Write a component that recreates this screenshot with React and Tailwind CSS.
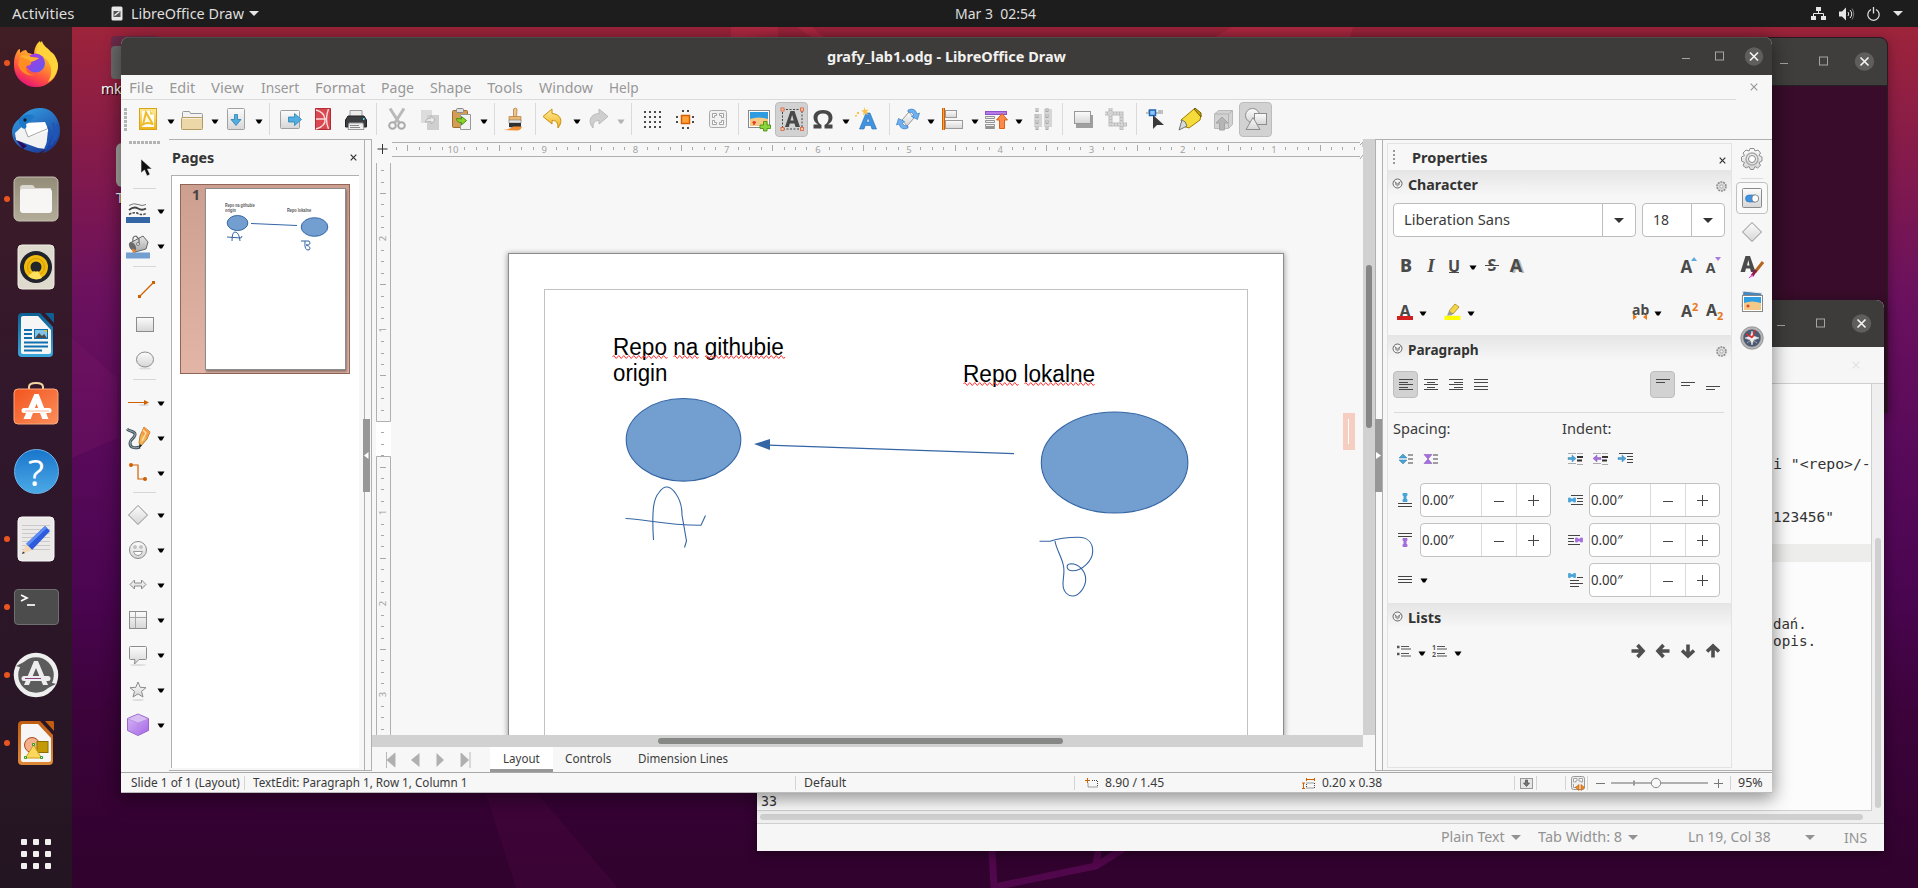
import React, { useLayoutEffect, useRef } from "react";

/* ---------- text that fills the width of its box ---------- */
function Fit({ className = "", children }) {
  const outer = useRef(null);
  const inner = useRef(null);
  useLayoutEffect(() => {
    const want = outer.current.getBoundingClientRect().width;
    const have = inner.current.offsetWidth;
    if (have) inner.current.style.transform = `scaleX(${want / have})`;
  }, [children]);
  return (
    <span ref={outer} className={"inline-block shrink-0 whitespace-nowrap leading-none " + className}>
      <span ref={inner} className="inline-block origin-left whitespace-pre">{children}</span>
    </span>
  );
}

const Svg = ({ w = 24, h = 24, c = "", children }) => (
  <svg width={w} height={h} viewBox={`0 0 ${w} ${h}`} className={"block shrink-0 overflow-visible " + c} fill="none">
    {children}
  </svg>
);
const Tri = ({ c = "", f = "#000" }) => (
  <Svg w={8} h={5} c={c}><path d="M0.5 0.5h7L5 4.5H3z" fill={f} /></Svg>
);
const Sep = ({ c }) => <span className={"block h-8 w-px shrink-0 bg-[#dadada] " + c} />;

function Gradients() {
  return (
    <svg width="0" height="0" className="absolute">
      <defs>
        <linearGradient id="gy" x2="0" y2="1"><stop stopColor="#fcfcfc" /><stop offset="1" stopColor="#d6d6d6" /></linearGradient>
        <linearGradient id="ff" x1=".8" y1="0" x2=".3" y2="1"><stop stopColor="#ffe83f" /><stop offset=".45" stopColor="#ff9a2e" /><stop offset=".75" stopColor="#ff4a44" /><stop offset="1" stopColor="#e3127b" /></linearGradient>
        <linearGradient id="tb" x2=".6" y2="1"><stop stopColor="#35a7e8" /><stop offset="1" stopColor="#1c3f9e" /></linearGradient>
        <linearGradient id="pp" x2="1" y2="1"><stop stopColor="#b833e1" /><stop offset="1" stopColor="#5a5df0" /></linearGradient>
        <linearGradient id="fl" x2="0" y2="1"><stop stopColor="#938c79" /><stop offset="1" stopColor="#b3ac99" /></linearGradient>
        <linearGradient id="or" x2="1" y2="1"><stop stopColor="#f3541d" /><stop offset="1" stopColor="#fb8f5c" /></linearGradient>
        <linearGradient id="yl" x2="0" y2="1"><stop stopColor="#ffeb9a" /><stop offset="1" stopColor="#f0b21a" /></linearGradient>
        <linearGradient id="vi" x2="1" y2="1"><stop stopColor="#d9b8f6" /><stop offset="1" stopColor="#a466e6" /></linearGradient>
        <linearGradient id="wr" x2="0" y2="1"><stop stopColor="#0c6192" /><stop offset="1" stopColor="#3aa7dc" /></linearGradient>
        <linearGradient id="dr" x2="0" y2="1"><stop stopColor="#c05d11" /><stop offset="1" stopColor="#dd8a3a" /></linearGradient>
        <linearGradient id="mn" x2="0" y2="1"><stop stopColor="#e8e8e8" /><stop offset="1" stopColor="#a8a8a8" /></linearGradient>
      </defs>
    </svg>
  );
}

/* ---------- dock ---------- */
const Firefox = () => (
  <Svg w={48} h={48}>
    <path d="M2 25c0-7 2-11 4-14 1-1 2-1 2-1l0 4c2-2 4-3 6-3l2 3c2 0 4 1 6 2 0-6 2-11 6-14 1 5 5 7 9 11 4 1 9 8 9 14a22 21 0 0 1-44 0z" fill="url(#ff)" />
    <path d="M30 2c1 5 6 7 9 11 3 1 7 8 7 14-1 8-5 14-10 16 4-6 5-16-1-22-5-5-10-5-11-7 1-6 3-10 6-12z" fill="#ffd43a" />
    <circle cx="23.500" cy="24" r="9.500" fill="url(#pp)" />
    <path d="M8 17c4-3 8-1 11 1l8 1c-2 2-6 3-8 4 1 3-3 4-5 4-1 5 3 9 9 9-8 2-16-4-17-11z" fill="#ff8d24" />
    <path d="M8 17c4-2 8-1 11 1l8 1c-2 2-6 3-8 4-2-3-7-3-11-6z" fill="#ffb02e" />
  </Svg>
);
const Thunderbird = () => (
  <Svg w={50} h={50}>
    <path d="M8 13C13 7 20 1 31 2c11 1 18 11 18 23 0 10-7 20-18 22l5-4-9 4C12 45 1 38 1 26c0-6 4-11 7-13z" fill="url(#tb)" />
    <path d="M3 31l9 12 4-3z" fill="#2b0d63" />
    <path d="M4 27l12-11 21 8-2 19-8-1-22-8z" fill="#f2f2f2" />
    <path d="M13 17l21-1 4 9-20 6z" fill="#fff" /><path d="M12 18l5 13 19-8" stroke="#a5a5a5" />
    <path d="M8 14c4-6 12-7 16-3-4 1-3 5-9 7 2 6-4 6-5 2-2-2-3-4-2-6z" fill="#1e78c8" />
    <circle cx="14" cy="14" r="1.700" fill="#123" />
    <path d="M37 21c3 6 1 15-3 22M42 17c3 7 2 16-2 22M46 18c2 7 0 12-2 16" stroke="#1d55b8" strokeWidth="2" />
  </Svg>
);
const Files = () => (
  <Svg w={46} h={46}>
    <rect x="1" y="1" width="44" height="44" rx="5" fill="url(#fl)" stroke="#c7c2b3" />
    <path d="M7 12q0-3 3-3h9q2 0 3 3l16 0v8H7z" fill="#d9d7d0" />
    <rect x="7" y="13" width="32" height="24" rx="3" fill="#f7f6f4" />
  </Svg>
);
const Rhythm = () => (
  <Svg w={38} h={46}>
    <rect x="1" y="1" width="36" height="44" rx="4" fill="#dedacd" stroke="#f0ede4" />
    <circle cx="19" cy="23" r="16" fill="#20232b" /><circle cx="19" cy="23" r="12" fill="#f0bb0d" />
    <circle cx="19" cy="23" r="8.500" stroke="#d29c08" /><circle cx="19" cy="23" r="5.500" fill="#23262b" />
    <path d="M11 32a12 12 0 0 0 14 2l-4-7q-2 1-4 0z" fill="#ffe15e" />
  </Svg>
);
const WriterIcon = () => (
  <Svg w={38} h={46}>
    <path d="M5 1h18l13 14v26q0 4-4 4H5q-4 0-4-4V5q0-4 4-4z" fill="url(#wr)" />
    <path d="M28 1h8q1 0 1 2v8z" fill="#0c6192" />
    <path d="M6 4h15l13 14v22q0 2-2 2H6q-2 0-2-2V6q0-2 2-2z" fill="#f6f6f6" />
    <path d="M7 18h8M7 22h8M7 26h8M7 30.500h24M7 34.500h24M7 38.500h18" stroke="#0f6fae" strokeWidth="2" />
    <rect x="17.500" y="17.500" width="13" height="9" fill="#7fc4e8" stroke="#0f6fae" />
    <path d="M18 26l4-5 3 3 2-2 3 4z" fill="#4a4a4a" /><path d="M27 18h3v3z" fill="#f7c400" />
  </Svg>
);
const Software = () => (
  <Svg w={46} h={44}>
    <path d="M16 9V6q0-4 7-4t7 4v3" stroke="#f6d6a0" strokeWidth="2" />
    <rect x="1" y="8" width="44" height="35" rx="4" fill="url(#or)" stroke="#f9a77f" />
    <path d="M22 14h3l9 23h-4l-6.500-17L17 37h-5z" fill="#fff" stroke="#fff" strokeWidth="2" />
    <path d="M11 29.500h25" stroke="#fff" strokeWidth="5" strokeLinecap="round" /><path d="M12 30h24" stroke="#f8b79b" />
  </Svg>
);
const Help = () => (
  <div className="flex size-[45px] items-center justify-center rounded-full border border-[#6cb6ec] bg-gradient-to-b from-[#1876cc] to-[#4ba9e6] font-['Open_Sans',sans-serif] text-[37px] leading-none text-white">?</div>
);
const Gedit = () => (
  <Svg w={38} h={46}>
    <rect x="1" y="1" width="36" height="44" rx="4" fill="#eceae9" stroke="#fafafa" />
    <path d="M5 9.500h28M5 13.500h28M5 17.500h28M5 21.500h28M5 25.500h28M5 29.500h28M5 33.500h28" stroke="#c9c9c9" />
    <path d="M9 28l19-18 5 5-18 19z" fill="#2c5bdc" /><path d="M9 28l19-18 2 2-19 18z" fill="#5d8cf5" />
    <path d="M9 28l6 6-10 4z" fill="#f4d7b5" /><path d="M6 35.500l2 1.500-3 1z" fill="#333" />
  </Svg>
);
const TermIcon = () => (
  <div className="h-[36px] w-[45px] rounded-[4px] border border-[#6f6f6f] bg-[#4c4c4c] px-[5px] py-[2px]">
    <Svg w={20} h={18}><path d="M1 3l6 3-6 3" stroke="#fff" strokeWidth="1.700" /><path d="M7 13h8" stroke="#fff" strokeWidth="1.700" /></Svg>
  </div>
);
const Updater = () => (
  <Svg w={46} h={46}>
    <circle cx="23" cy="23" r="20" fill="#5c5c5c" stroke="#eee" strokeWidth="4.500" />
    <path d="M3 14l7 2 3-7zM43 32l-7-2-3 7z" fill="#5c5c5c" />
    <path d="M21 9h4l10 24h-5l-7-17-7 17h-5z" fill="#eee" />
    <path d="M11 26.500h24" stroke="#eee" strokeWidth="5" strokeLinecap="round" /><path d="M12 26.500h16" stroke="#8a3d7d" />
  </Svg>
);
const DrawIcon = () => (
  <Svg w={38} h={46}>
    <path d="M5 1h18l13 14v26q0 4-4 4H5q-4 0-4-4V5q0-4 4-4z" fill="url(#dr)" />
    <path d="M28 1h8q1 0 1 2v8z" fill="#c05d11" />
    <path d="M6 4h15l13 14v22q0 2-2 2H6q-2 0-2-2V6q0-2 2-2z" fill="#f6f6f6" />
    <circle cx="15" cy="25" r="7.500" fill="#f3b08d" stroke="#b1491b" />
    <rect x="20" y="21.500" width="11" height="11" fill="#c39a05" stroke="#8a6c00" />
    <path d="M16.500 25l8 13h-16z" fill="#fbd75d" stroke="#cf9d14" />
    <path d="M15.500 23.500h2v2h-2zM7.500 36.500h2v2h-2zM23.500 36.500h2v2h-2z" fill="#fff" stroke="#2aa31d" />
  </Svg>
);

const dock = [
  [Firefox, true], [Thunderbird, false], [Files, true], [Rhythm, false], [WriterIcon, false], [Software, false],
  [Help, false], [Gedit, true], [TermIcon, true], [Updater, true], [DrawIcon, true],
];

function Dock() {
  return (
    <aside className="flex h-full w-[72px] shrink-0 flex-col bg-gradient-to-b from-[#411d24] via-[#31172c] via-45% to-[#241522] pt-[2px]">
      {dock.map(([Icon, on], i) => (
        <div key={i} className="flex h-[68px] shrink-0 items-center">
          <span className={"ml-1 size-[6px] rounded-full " + (on ? "bg-[#e95420]" : "bg-transparent")} />
          <div className="ml-[2px] flex w-12 justify-center"><Icon /></div>
        </div>
      ))}
      <div className="ml-[21px] mt-[62px] grid w-[30px] grid-cols-3 gap-[6px]">
        {Array.from({ length: 9 }, (_, i) => <span key={i} className="size-[6px] rounded-[1px] bg-[#f2f0ee]" />)}
      </div>
    </aside>
  );
}

/* ---------- top bar ---------- */
function TopBar() {
  return (
    <header className="flex h-[27px] w-full shrink-0 items-center bg-[#1d1d1d] text-[14px] text-[#dedede]">
      <Fit className="ml-3 w-[62px]">Activities</Fit>
      <Svg w={12} h={15} c="ml-[37px]">
        <rect x=".5" y=".5" width="11" height="14" rx="1.500" fill="#e8e8e8" /><path d="M2.500 5h7v6h-7z" fill="#555" /><path d="M3.500 9.500l5-4" stroke="#eee" strokeWidth="1.500" />
      </Svg>
      <Fit className="ml-2 w-[113px]">LibreOffice Draw</Fit>
      <Svg w={10} h={5} c="ml-[5px]"><path d="M0 0h10L5 5z" fill="#e6e6e6" /></Svg>
      <Fit className="ml-[696px] w-[81px]">Mar 3  02:54</Fit>
      <div className="ml-auto mr-[15px] flex items-center gap-[13px]">
        <Svg w={15} h={13}><path d="M5 0h5v4H5zM0 9h5v4H0zM10 9h5v4h-5z" fill="#e6e6e6" /><path d="M7.500 4v3M2.500 9V6.500h10V9" stroke="#e6e6e6" /></Svg>
        <Svg w={15} h={14}><path d="M0 4.500h3L7 .5v13l-4-4H0z" fill="#e6e6e6" /><path d="M9 5q1.500 2 0 4M11 3q3.500 4 0 8" stroke="#e6e6e6" /><path d="M13 1.500q3.500 5.500 0 11" stroke="#777" /></Svg>
        <Svg w={13} h={14}><path d="M4 2.500a5.700 5.700 0 1 0 5 0" stroke="#e6e6e6" strokeWidth="1.200" /><path d="M6.500 0v6.500" stroke="#e6e6e6" strokeWidth="1.300" /></Svg>
        <Svg w={10} h={5}><path d="M0 0h10L5 5z" fill="#e6e6e6" /></Svg>
      </div>
    </header>
  );
}

/* ---------- window frame pieces ---------- */
const WinButtons = ({ gap, size = 18 }) => (
  <div className={"flex items-center " + gap}>
    <Svg w={8} h={12}><path d="M0 7.500h8" stroke="#a5a4a2" /></Svg>
    <Svg w={9} h={9}><rect x=".5" y="0" width="8" height="8" stroke="#a5a4a2" /></Svg>
    <Svg w={size} h={20} c="-ml-1">
      <ellipse cx={size / 2} cy="9.500" rx={size / 2 + 0.2} ry="9.300" fill="#5f5e5d" />
      <path d={`M${size / 2 - 4} 5.500l8 8m0-8l-8 8`} stroke="#f4f4f4" strokeWidth="1.700" />
    </Svg>
  </div>
);
const Cross = ({ s = 8, f = "#333", c = "" }) => (
  <Svg w={s} h={s} c={c}><path d={`M.7.7L${s - 0.7} ${s - 0.7}M${s - 0.7}.7L.7 ${s - 0.7}`} stroke={f} strokeWidth="1.200" /></Svg>
);

function TerminalWindow() {
  return (
    <section className="absolute left-[757px] top-[37px] flex h-[376px] w-[1131px] flex-col overflow-hidden rounded-t-lg border border-[#2b1a24] bg-[#380c2a] shadow-[0_3px_12px_rgba(0,0,0,0.35)]">
      <div className="flex h-[48px] shrink-0 items-center justify-end border-b border-[#222] bg-[#3f3e3d] pr-[13px]">
        <WinButtons gap="gap-[31px]" size={19} />
      </div>
      <div className="flex-1 bg-[#380c2a]" />
    </section>
  );
}

const lines = {
  4: ['i "<repo>/-', "w-[98px]"], 7: ['123456"', "w-[61px]"], 13: ["dań.", "w-[34px]"], 14: ["opis.", "w-[43px]"],
};
function GeditWindow() {
  return (
    <section className="absolute left-[757px] top-[300px] flex h-[551px] w-[1127px] flex-col overflow-hidden rounded-t-lg bg-[#f6f6f6] shadow-[0_3px_12px_rgba(0,0,0,0.45)]">
      <div className="flex h-[47px] shrink-0 items-center justify-end bg-[#3d3c3a] pr-[13px]">
        <WinButtons gap="gap-[31px]" size={19} />
      </div>
      <div className="flex h-[37px] shrink-0 items-center justify-end border-b border-[#cfcfcf] bg-[#f6f6f6] pr-6"><Cross f="#e0e0e0" /></div>
      <div className="flex h-[427px] shrink-0">
        <div className="w-[1115px] overflow-hidden border-b border-r border-[#cfcfcf] bg-[#fcfcfc] font-['DejaVu_Sans_Mono',monospace] text-[14px] text-[#333]">
          {Array.from({ length: 24 }, (_, i) => (
            <div key={i} className={"flex h-[17.75px] items-center " + (i === 9 ? "bg-[#ededeb]" : "")}>
              {lines[i] && <Fit className={"ml-[1016px] " + lines[i][1]}>{lines[i][0]}</Fit>}
              {i === 23 && <Fit className="ml-1 w-4">33</Fit>}
            </div>
          ))}
        </div>
        <div className="flex-1 bg-[#efefef] pl-[3px] pt-[154px]"><div className="h-[270px] w-[6px] rounded-full bg-[#cfcfcf]" /></div>
      </div>
      <div className="flex h-[13px] shrink-0 items-center border-b border-[#cfcfcf] bg-[#efefef] pl-[3px]"><div className="h-[6px] w-[1103px] rounded-full bg-[#cfcfcf]" /></div>
      <div className="flex flex-1 items-center pb-px text-[14px] text-[#939393]">
        <Fit className="ml-[684px] w-[64px]">Plain Text</Fit>
        <Svg w={10} h={5} c="ml-[6px]"><path d="M0 0h10L5 5z" fill="#929292" /></Svg>
        <Fit className="ml-[17px] w-[84px]">Tab Width: 8</Fit>
        <Svg w={10} h={5} c="ml-[6px]"><path d="M0 0h10L5 5z" fill="#929292" /></Svg>
        <Fit className="ml-[50px] w-[83px]">Ln 19, Col 38</Fit>
        <Svg w={10} h={5} c="ml-[34px]"><path d="M0 0h10L5 5z" fill="#929292" /></Svg>
        <Fit className="ml-[29px] mt-[2px] w-[23px]">INS</Fit>
      </div>
    </section>
  );
}

/* ---------- Draw: standard toolbar ---------- */
const G = "#8c8c8c";
const I = {
  fresh: <><rect x="3.500" y="1.500" width="17" height="21" fill="url(#yl)" stroke="#d8a219" /><path d="M6 4h9l3 3v13H6z" fill="#fffdf2" /><path d="M14 3.500v4h4z" fill="#f5cf57" /><path d="M10 5.500l7 12q-5-3-10 0z" fill="#fff8dc" stroke="#eebc2a" strokeWidth="2" /></>,
  open: <><path d="M2.500 5.500q0-1 1-1h6l1 2h11q1 0 1 1V13h-20z" fill="#f2f2f2" stroke="#999" /><rect x="1.500" y="10.500" width="21" height="12" rx="1" fill="#ecd7a9" stroke="#b59a66" /><path d="M2.500 11.500h19" stroke="#faf0d8" /></>,
  save: <><rect x="3.500" y="1.500" width="17" height="21" rx="1" fill="url(#gy)" stroke="#a0a0a0" /><path d="M10.500 7.500h3v5h3.500L12 18.500 7 12.500h3.500z" fill="#52aee0" stroke="#2a82b4" strokeWidth=".8" /></>,
  exp: <><rect x="1.500" y="3.500" width="19" height="18" rx="1" fill="url(#gy)" stroke="#a0a0a0" /><path d="M9.500 10h6V6.500l7 6-7 6V15h-6z" fill="#52aee0" stroke="#2a82b4" strokeWidth=".8" /></>,
  pdf: <><path d="M4.500 1.500h15v21h-15z" fill="#d94850" stroke="#b32b34" /><path d="M5 3q8 2 9 9t-9 10M17.500 2q-4 10 0 20M5 12h10" stroke="#f7dada" strokeWidth="1.400" /></>,
  print: <><path d="M6 3.500h12v6H6z" fill="#ececec" stroke="#9a9a9a" /><path d="M4 9h16l2.500 4v7h-21v-7z" fill="#3c3f42" stroke="#222" /><path d="M5 16h14l1 6.500H4z" fill="#efefef" stroke="#999" /><path d="M6 18.500h9M6 20.500h10" stroke="#888" /><path d="M19 12h1.500" stroke="#4fd7ef" strokeWidth="2" /></>,
  cut: <><path d="M5 1.500l9 14M19 1.500l-9 14" stroke="#b9b9b9" strokeWidth="3" /><circle cx="7.500" cy="18.500" r="3.300" stroke="#aaa" strokeWidth="2" /><circle cx="16.500" cy="18.500" r="3.300" stroke="#aaa" strokeWidth="2" /></>,
  copy: <><path d="M3 3h11v13H3z" fill="#dcdcdc" /><path d="M9 8h12v15H9z" fill="#cfcfcf" /><path d="M7 15q1-4 6-4V8.500l4 4.500-4 4v-2.500q-3 0-6 .5z" fill="#e9e9e9" stroke="#b5b5b5" /></>,
  paste: <><rect x="3.500" y="3.500" width="15" height="17" rx="1" fill="#d39d55" stroke="#9f6e2c" /><rect x="7.500" y="1.500" width="7" height="4" rx="1" fill="#ddd" stroke="#888" /><path d="M11.500 7.500h10v15h-10z" fill="#f2f2f2" stroke="#999" /><path d="M7.500 9.500q0 4 5 4V16l5-4.500-5-4V10z" transform="translate(0 2)" fill="#8bd52c" stroke="#4c8f10" /></>,
  brush: <><path d="M10.500 2q2-2 3.500 0l-.5 8h-3z" fill="#f0c48a" stroke="#a8743a" strokeWidth=".7" /><path d="M6 9.500h12v4H6z" fill="#e9b873" stroke="#b27c3d" strokeWidth=".7" /><path d="M6 13h12v3H6z" fill="#e5e5e5" stroke="#777" strokeWidth=".6" /><path d="M6 16h12v4q-6 1-12 0z" fill="#2f3133" /><path d="M0 23q8-1 10-3.500h9q-1 4-5 4z" fill="#f18f34" /></>,
  undo: <path d="M2 9.500L11 2v4.500c8 .5 12 7 6 14.500 0-6-2-7.500-6-7.500V17z" fill="url(#yl)" stroke="#c98e12" />,
  redo: <path d="M22 9.500L13 2v4.500c-8 .5-12 7-6 14.500 0-6 2-7.500 6-7.500V17z" fill="#cfcfcf" stroke="#bababa" />,
  grid: <>{[5, 10, 15, 20].map((y) => <path key={y} d={`M4 ${y}h18`} stroke="#4a4a4a" strokeWidth="2" strokeDasharray="2 3" />)}</>,
  help: <><path d="M9 4h8M9 21h8M4 9v8M20 9v8" stroke="#4a4a4a" strokeWidth="2" strokeDasharray="2 3" /><rect x="8.500" y="8.500" width="8" height="8" fill="#ffa13b" stroke="#d55f00" strokeWidth="1.500" /></>,
  fit: <><rect x="3.500" y="3.500" width="17" height="17" rx="2" fill="#f1f1f1" stroke="#aaa" /><path d="M6.500 10.500v-4h4v2h-2v2zM13.500 6.500h4v4h-2v-2h-2zM6.500 13.500v4h4v-2h-2v-2zM17.500 13.500v4h-4v-2h2v-2z" fill="#fff" stroke="#999" strokeWidth=".9" /></>,
  image: <><rect x="1.500" y="3.500" width="21" height="17" fill="#fff" stroke="#888" /><path d="M3 5h18v8H3z" fill="#2f9be0" /><path d="M3 12q8-3 18 0v7H3z" fill="#f6c987" /><path d="M7 14v4M5.500 15.500h3.500" stroke="#e4341c" strokeWidth="1.500" /><path d="M16.500 14.500h3.500V18h3.500v3.500H20V24h-3.500v-2.500H13V18h3.500z" fill="#8bd53d" stroke="#4b9310" strokeWidth=".9" /></>,
  omega: <path d="M2.500 21.500v-4h4.500C4 15.500 2.500 13.500 2.500 10.500 2.500 6 6 3 12 3s9.500 3 9.500 7.500c0 3-1.500 5-4.500 7h4.500v4H13.500v-3.500q4-2 4-7 0-4.500-5.500-4.500T6.500 11q0 5 4 7v3.500z" fill="#484848" />,
  font: <><path d="M4.500 22L11 6h4l6.500 16h-4.500l-1.200-3.500h-5.500L9 22zM11.500 15h3.200L13 10.500z" fill="#3f93e0" stroke="#2f6fb0" strokeWidth=".6" /><path d="M9 0l1.500 3 3-.5-2 2.500 1.500 3-3-1.500L8 8.500l.5-3.200L6 3.500l3-.3zM2 5h2v2H2zM0 8h2v1.500H0z" fill="#ffc13f" /></>,
  xform: <><path d="M13 5l5 6-7 8-5-6z" fill="url(#gy)" stroke="#999" /><path d="M12 3q7-3 9 4l2.500-1-2 6.500-6-3 2.500-1.500q-2-3.500-6-3z" fill="#6fb1ee" stroke="#3a7fc6" strokeWidth=".7" /><path d="M12 21q-7 3-9-4l-2.500 1L2.500 11.500l6 3L6 16q2 3.500 6 3z" fill="#6fb1ee" stroke="#3a7fc6" strokeWidth=".7" /></>,
  align: <><path d="M3.500 1v22" stroke="#d55f00" strokeWidth="3" /><path d="M3.500 1v22" stroke="#ffa13b" /><rect x="5.500" y="3.500" width="11" height="7" fill="url(#gy)" stroke="#999" /><rect x="5.500" y="13.500" width="17" height="8" fill="url(#gy)" stroke="#999" /></>,
  arrange: <><rect x="1.500" y="4.500" width="21" height="3" fill="#b57ae8" stroke="#8e51c9" /><path d="M1.500 9.500h9v2h-9zM1.500 13.500h9v2h-9zM1.500 17.500h9v2h-9zM1.500 20.500h9v1h-9z" fill="#eee" stroke="#888" strokeWidth=".9" /><path d="M18 6.500l5.500 6.500h-3v8.500h-5V13h-3z" fill="#f98a4a" stroke="#d5560c" strokeWidth=".9" /></>,
  dist: <><rect x="4" y="7" width="8" height="13" fill="#d6d6d6" /><rect x="14" y="2" width="8" height="18" fill="#d6d6d6" /><path d="M7 1v22M17 1v22" stroke="#a9a9a9" strokeWidth="3" strokeDasharray="4 2" /><path d="M7 1v22M17 1v22" stroke="#e6e6e6" strokeDasharray="3 3" /></>,
  shadow: <><rect x="5" y="8" width="17" height="13" fill="#9f9f9f" /><rect x="3.500" y="4.500" width="16" height="12" fill="url(#gy)" stroke="#999" /></>,
  crop: <><path d="M1 6.500h16.500V23M6.500 1v16.500H23" stroke="#bdbdbd" strokeWidth="4" /><path d="M1 6.500h16.500V23M6.500 1v16.500H23" stroke="#d9d9d9" strokeWidth="2" strokeDasharray="2 1" /></>,
  pts: <><path d="M3 6h17M5 4h3M15 4h5" stroke="#888" strokeWidth="1.200" /><rect x="6.500" y="3" width="6" height="5.500" fill="#8fc4f6" stroke="#1e66b8" strokeWidth="1.500" /><path d="M10 8v14l4-4h7z" fill="#3a3a3a" /></>,
  glue: <><path d="M3 13l13-11 7 6-1 5-11 8-6-2z" fill="#f5dc3b" stroke="#9b7f00" strokeWidth="1" /><path d="M16 2l1-1 6 5v4z" fill="#cfa900" stroke="#6e5a00" /><path d="M4 13q4 1 5 6L1 23z" fill="#d9d9d9" stroke="#666" strokeWidth=".9" /></>,
  extr: <><path d="M3.500 7l4-3.500h14v14l-4 4h-14z" fill="#d2d2d2" stroke="#b9b9b9" /><path d="M3.500 7h14v14M17.500 7l4-3.500" stroke="#b3b3b3" /><path d="M11 10l6 6h-3.500v7h-5v-7H5z" fill="#b5b5b5" stroke="#a4a4a4" /></>,
  shapes: <><circle cx="8.500" cy="8.500" r="7" fill="url(#gy)" stroke={G} /><rect x="10.500" y="6.500" width="12" height="11" fill="url(#gy)" stroke={G} /><path d="M9 10.500l7 12H2z" fill="url(#gy)" stroke={G} /></>,
};
const T = ({ n, c }) => <Svg c={c}>{I[n]}</Svg>;

function StandardBar() {
  return (
    <div className="flex h-[38px] shrink-0 items-center overflow-hidden pl-[3px]">
      <Svg w={3} h={23}><path d="M1.500 0v23" stroke="#b3b3b3" strokeWidth="3" strokeDasharray="3 1" /></Svg>
      <T n="fresh" c="ml-[9px]" /><Tri c="ml-[7px] mt-1" /><T n="open" c="ml-[5px]" /><Tri c="ml-[7px] mt-1" /><T n="save" c="ml-[5px]" /><Tri c="ml-[7px] mt-1" />
      <Sep c="ml-[6px]" /><T n="exp" c="ml-[9px]" /><T n="pdf" c="ml-2" /><T n="print" c="ml-[9px]" />
      <Sep c="ml-2" /><T n="cut" c="ml-2" /><T n="copy" c="ml-[9px]" /><T n="paste" c="ml-[7px]" /><Tri c="ml-[7px] mt-1" />
      <Sep c="ml-[6px]" /><T n="brush" c="ml-2" /><Sep c="ml-2" />
      <T n="undo" c="ml-[5px]" /><Tri c="ml-2 mt-1" /><T n="redo" c="ml-[5px]" /><Tri c="ml-[7px] mt-1" f="#b4b4b4" />
      <Sep c="ml-[6px]" /><T n="grid" c="ml-2" /><T n="help" c="ml-[9px]" /><T n="fit" c="ml-[9px]" />
      <Sep c="ml-2" /><T n="image" c="ml-2" />
      <div className="ml-1 flex h-[35px] w-[33px] shrink-0 items-center justify-center rounded-[4px] border border-[#bcbcbc] bg-[#d2d2d2]">
        <Svg>
          <rect x="2.500" y="2.500" width="19.500" height="19.500" stroke="#444" strokeDasharray="2 1.500" />
          <path d="M5 20L10.500 4h4L20 20h-4.500l-1-3.500H9.800L8.800 20zM10.500 13.500h3.200l-1.600-5.500z" fill="#484848" />
          {[[1, 1], [20.5, 1], [1, 20.5], [20.5, 20.5]].map(([x, y]) => <rect key={x + "-" + y} x={x} y={y} width="3" height="3" fill="#ffc79c" stroke="#dd6a50" strokeWidth=".9" />)}
        </Svg>
      </div>
      <T n="omega" c="ml-[3px]" /><Tri c="ml-[7px] mt-1" /><T n="font" c="ml-[5px]" />
      <Sep c="ml-[10px]" /><T n="xform" c="ml-[6px]" /><Tri c="ml-[7px] mt-1" /><T n="align" c="ml-[5px]" /><Tri c="ml-[7px] mt-1" /><T n="arrange" c="ml-[5px]" /><Tri c="ml-[7px] mt-1" /><T n="dist" c="ml-[7px]" />
      <Sep c="ml-2" /><T n="shadow" c="ml-2" /><T n="crop" c="ml-[9px]" />
      <Sep c="ml-2" /><T n="pts" c="ml-[6px]" /><T n="glue" c="ml-[11px]" /><T n="extr" c="ml-[9px]" />
      <div className="ml-1 flex h-[35px] w-[33px] shrink-0 items-center justify-center rounded-[4px] border border-[#bcbcbc] bg-[#d2d2d2]"><T n="shapes" /></div>
    </div>
  );
}

/* ---------- Draw: left toolbox ---------- */
const B = {
  lcol: <><path d="M3 6.500q5-3 9-1t8 0" stroke="#777" /><path d="M3 11q5-4 9-1.500t8 0" stroke="#444" strokeWidth="1.800" /><path d="M3 15.500q5-3 9-1t8 0" stroke="#444" strokeDasharray="2.500 1.200" strokeWidth="1.500" /><path d="M0 18h24v6H0z" fill="#3465a4" /></>,
  fill: <><path d="M4 9L17 2l5 6-2 7-11 3z" fill="url(#mn)" stroke="#666" /><ellipse cx="6.500" cy="12.500" rx="3" ry="5" fill="#6a6a6a" transform="rotate(-30 6.500 12.500)" /><path d="M7 8q-1-6 3-6l3 3v5" stroke="#666" strokeWidth="1.200" /><circle cx="12" cy="10" r="1.500" fill="#eee" stroke="#666" strokeWidth=".8" /><path d="M6 15q4-1 3 5H7z" fill="#f08022" /><path d="M0 18.500h24v6H0z" fill="#729fcf" /></>,
  arrow: <><ellipse cx="18" cy="14" rx="5" ry="1" fill="#ddd" /><path d="M2 11.500h17" stroke="#d05f00" /><path d="M18 9l5 2.500-5 2.500z" fill="#d05f00" /></>,
  pencil: <><path d="M1 3c3 3 9 2 8 6s-5 4-5 8 3 6 10 4" stroke="#46555e" strokeWidth="3" /><path d="M1 3c3 3 9 2 8 6s-5 4-5 8 3 6 10 4" stroke="#9fb0ba" /><path d="M18 1l6 5-3 7-6 7-2-3 1-7z" fill="#f3b14f" stroke="#9d6a1e" strokeWidth=".8" /><path d="M18 1l6 5-3 6-6-4z" fill="#f79a45" /><path d="M17 4l3 3-4 8" stroke="#fde2a4" strokeWidth="1.400" /><path d="M13.500 18l2.500 1.500-3 3z" fill="#222" /></>,
  conn: <><path d="M5 4h7v14h8" stroke="#d05f00" strokeWidth="1.200" /><circle cx="5" cy="4" r="2" fill="#d05f00" /><circle cx="19" cy="18" r="2" fill="#d05f00" /></>,
  dia: <path d="M12 2.500l9.500 9.500-9.500 9.500L2.500 12z" fill="url(#gy)" stroke={G} />,
  smile: <><circle cx="12" cy="12" r="8.500" fill="url(#gy)" stroke={G} /><rect x="7.500" y="7.500" width="3" height="3" rx="1.500" fill="#c6c6c6" stroke="#aaa" strokeWidth=".5" /><rect x="13.500" y="7.500" width="3" height="3" rx="1.500" fill="#c6c6c6" stroke="#aaa" strokeWidth=".5" /><path d="M7.500 13.500h9q-1 4-4.500 4t-4.500-4z" fill="#fff" stroke="#999" /></>,
  dbl: <path d="M4 11.500L8.500 7v3h7V7l4.500 4.500-4.500 4.500v-3h-7v3z" fill="url(#gy)" stroke={G} />,
  flow: <><rect x="3.500" y="3.500" width="17" height="17" fill="url(#gy)" stroke={G} /><path d="M9.500 4v16M4 9.500h16" stroke="#a5a5a5" /></>,
  call: <><path d="M4.500 3.500h15q1 0 1 1v11q0 1-1 1H13L8.500 21l.5-4.500H4.500q-1 0-1-1v-11q0-1 1-1z" fill="url(#gy)" stroke={G} /><ellipse cx="12" cy="22" rx="8" ry="1" fill="#ddd" /></>,
  star: <><path d="M12 4l2.200 5.300 5.800.4-4.500 3.700 1.500 5.600-5-3.100-5 3.100 1.500-5.600L4 9.700l5.800-.4z" fill="url(#gy)" stroke={G} /><ellipse cx="12" cy="22" rx="6" ry="1" fill="#ddd" /></>,
  cube: <><path d="M12 1l10.500 4.500v12L12 22.500 1.500 17.500v-12z" fill="url(#vi)" stroke="#9a66cc" /><path d="M12 1.500L22 6l-10 4L2 6z" fill="#d8bdf3" /><path d="M12 10v12M2 6l10 4 10-4" stroke="#b78be6" strokeWidth=".8" /></>,
};
const Tool = ({ n, top = "" }) => (
  <div className={"flex h-[35px] shrink-0 items-center pl-[5px] " + top}>
    <Svg c="-mt-[1px]">{B[n]}</Svg><Tri c="ml-[7px]" />
  </div>
);
const HSep = ({ c }) => <div className={"ml-3 h-px w-[23px] shrink-0 bg-[#d6d6d6] " + c} />;

function Toolbox() {
  return (
    <div className="flex w-[48px] shrink-0 flex-col">
      <Svg w={31} h={7} c="ml-2"><path d="M0 3.500h31" stroke="#b3b3b3" strokeWidth="3" strokeDasharray="3 1" /></Svg>
      <div className="flex h-[42px] shrink-0 items-center pl-3"><Svg><path d="M8 4v14l3.500-3 2.500 6 3-1.500-2.500-5.500h4.500z" fill="#111" stroke="#f7f7f7" strokeWidth=".6" /></Svg></div>
      <HSep c="" />
      <Tool n="lcol" top="mt-[5px]" /><Tool n="fill" />
      <HSep c="mt-[2px]" />
      <div className="mt-1 flex h-[35px] shrink-0 items-center pl-[14px]"><Svg><path d="M5 19L19 5" stroke="#d05f00" strokeWidth="1.300" /><path d="M3 18h3v3H3zM17 4h3v3h-3z" fill="#d05f00" /></Svg></div>
      <div className="flex h-9 shrink-0 items-center pl-3"><Svg><rect x="3.500" y="5.500" width="17" height="14" fill="url(#gy)" stroke={G} /></Svg></div>
      <div className="flex h-[35px] shrink-0 items-center pl-3"><Svg><ellipse cx="12" cy="20.500" rx="6" ry="1" fill="#ddd" /><ellipse cx="12" cy="11.500" rx="8.500" ry="7.500" fill="url(#gy)" stroke={G} /></Svg></div>
      <HSep c="mt-[2px]" />
      <Tool n="arrow" top="mt-[6px]" /><Tool n="pencil" /><Tool n="conn" />
      <HSep c="mt-px" />
      <Tool n="dia" top="mt-[5px]" /><Tool n="smile" /><Tool n="dbl" /><Tool n="flow" /><Tool n="call" /><Tool n="star" /><Tool n="cube" />
    </div>
  );
}

/* ---------- Draw: pages panel ---------- */
function PagesPanel() {
  return (
    <div className="flex w-[203px] shrink-0 border-y border-[#b0b0b0]">
      <div className="flex w-[196px] shrink-0 flex-col border-r border-[#b0b0b0] bg-[#f7f7f7] pl-[2px]">
        <div className="flex h-[35px] shrink-0 items-center justify-between pr-[7px]">
          <Fit className="ml-px w-[42px] text-[14px] font-bold text-[#333]">Pages</Fit>
          <Cross s={7} />
        </div>
        <div className="h-[593px] w-[188px] border-l border-t border-[#b0b0b0] bg-white pl-2 pt-2">
          <div className="flex h-[190px] w-[170px] justify-end border border-[#8f6659] bg-gradient-to-b from-[#cd9f90] to-[#e2b5a6] pr-[3px] pt-[3px]">
            <span className="mr-[5px] text-[14px] font-bold leading-none text-[#444]">1</span>
            <div className="h-[182px] w-[141px] border border-[#8c8c8c] bg-white pl-[19px] pt-[14px] font-['Liberation_Sans',sans-serif] text-[5px] font-bold text-[#555] shadow-[1px_2px_2px_rgba(0,0,0,0.35)]">
              <div className="flex h-[5px] items-center"><Fit className="w-[30px]">Repo na githubie</Fit></div>
              <div className="flex h-[5px] items-center"><Fit className="w-[11px]">origin</Fit><Fit className="ml-[51px] w-[24px]">Repo lokalne</Fit></div>
              <Svg w={110} h={44}>
                <g stroke="#3465a4"><ellipse cx="12.500" cy="10" rx="10.300" ry="7.500" fill="#729fcf" /><ellipse cx="89.500" cy="14" rx="13.300" ry="9.300" fill="#729fcf" />
                  <path d="M26 10.500l46 2M2 24l14 1 1-2M7 28q0-9 3-9 4 0 5 9M76 28h8q3 4-3 4 6 2 3 5-5 1-4-9" /></g>
              </Svg>
            </div>
          </div>
        </div>
      </div>
      <div className="flex w-[7px] shrink-0 flex-col border-r border-[#b0b0b0] pt-[279px]">
        <div className="-ml-[2px] flex h-[73px] w-[7px] items-center bg-[#979797]"><Svg w={6} h={7}><path d="M5.500 0v7L1 3.500z" fill="#fff" /></Svg></div>
      </div>
    </div>
  );
}

/* ---------- Draw: workspace ---------- */
function HRuler() {
  const ticks = [];
  for (let k = -5; k < 80; k++) {
    const x = 61 + k * 11.402;
    if (x < 2 || x > 968) continue;
    const m = ((k % 8) + 8) % 8;
    if (m === 0) ticks.push(<text key={k} x={x} y="14" textAnchor="middle" fontSize="9.500" fill="#a2a2a2" stroke="none">{10 - k / 8}</text>);
    else ticks.push(<path key={k} d={m === 4 ? `M${Math.round(x) + 0.5} 6v6` : `M${Math.round(x) + 0.5} 8v3`} />);
  }
  return (
    <div className="flex h-[21px] shrink-0">
      <Svg w={20} h={21}><path d="M5.500 10h10M10.500 5v10" stroke="#333" /></Svg>
      <Svg w={971} h={21}><g stroke="#a8a8a8"><path d="M0 3.500h968M0 17.500h968" stroke="#b0b0b0" />{ticks}<path d="M968 6l3-3v5M968 20l3-4" /></g></Svg>
    </div>
  );
}
function VRuler() {
  const ticks = [];
  for (let k = -22; k < 28; k++) {
    const y = 261 + k * 11.402;
    if (y < 6 || y > 573) continue;
    const m = ((k % 8) + 8) % 8;
    if (m === 0 && k !== 0) ticks.push(<text key={k} textAnchor="middle" fontSize="9.500" fill="#a2a2a2" stroke="none" transform={`translate(14 ${y}) rotate(-90)`}>{Math.abs(k / 8)}</text>);
    else if (k !== 0) ticks.push(<path key={k} d={m === 4 ? `M8 ${Math.round(y) + 0.5}h6` : `M9 ${Math.round(y) + 0.5}h3`} />);
  }
  return (
    <Svg w={20} h={575}>
      <rect x="4" y="261" width="15" height="35" fill="#fff" />
      <g stroke="#a8a8a8"><path d="M4.500 3v258.500h14V3M4.500 575V296.500h14V575" stroke="#b0b0b0" />{ticks}</g>
    </Svg>
  );
}
const wave = (x, y, len) => {
  let d = `M${x} ${y + 1.5}`;
  for (let i = 0; i < len; i += 5) d += "l1.25 -1.500l1.25 1.500l1.25 1.500l1.25 -1.500";
  return d;
};
function Canvas() {
  return (
    <div className="relative h-[575px] w-[971px] shrink-0 overflow-hidden bg-[#f7f7f7]">
      <div className="absolute left-[116px] top-[93px] h-[600px] w-[776px] border border-[#8c8c8c] bg-white p-[35px] shadow-[0_1px_5px_1px_rgba(0,0,0,0.32)]">
        <div className="h-full w-[704px] border border-[#c2c2c2]" />
      </div>
      <svg className="absolute inset-0" width="971" height="575" viewBox="392 160 971 575" fill="none" stroke="#3465a4" strokeWidth="1.100">
        <ellipse cx="683.500" cy="439.800" rx="57.300" ry="41.300" fill="#729fcf" />
        <ellipse cx="1114.600" cy="462.500" rx="73.300" ry="50.500" fill="#729fcf" />
        <path d="M768 445.100L1014 453.600" />
        <path d="M754 444l16-5v11z" fill="#3465a4" stroke="none" />
        <path d="M625.500 518.500C645 519 662 525 701 525.300L705.500 515.500" />
        <path d="M653.500 540C651.500 508 654 498 659 492.500C664 485 670 485 676 494C681 501 682 510 682 515L686.500 541L684.500 547.500" />
        <path d="M1039.500 541.300H1050C1058 538.500 1070 537.300 1078 537.300C1089 537.300 1092.700 544 1092.700 551C1092.700 561 1082 570.800 1072.500 570.800C1066 570.500 1065.500 564 1070.500 563.700C1080 563.700 1085.700 572 1085.700 579.500C1085.700 587 1079 596 1072.500 596C1068 596 1063 592 1063 584C1063 578 1064.800 572 1063.500 566C1062 557 1056 549 1055 541" />
      </svg>
      <div className="absolute left-[221px] top-[175px] flex flex-col font-['Liberation_Sans',Arial,sans-serif] text-[23.500px] text-black">
        <div className="flex h-[26px] items-center"><Fit className="w-[171px]">Repo na githubie</Fit></div>
        <div className="flex h-[26px] items-center"><Fit className="w-[54px]">origin</Fit></div>
      </div>
      <div className="absolute left-[571px] top-[202px] flex h-[26px] items-center font-['Liberation_Sans',Arial,sans-serif] text-[23.500px] text-black"><Fit className="w-[132px]">Repo lokalne</Fit></div>
      <svg className="absolute inset-0" width="971" height="575" viewBox="392 160 971 575" fill="none" stroke="#f33" strokeWidth="1">
        <path d={wave(612.5, 355.5, 53)} /><path d={wave(673.5, 355.5, 23)} /><path d={wave(705, 355.5, 78)} />
        <path d={wave(963.5, 382.5, 53)} /><path d={wave(1024.5, 382.5, 70)} />
      </svg>
      <div className="absolute left-[951px] top-[253px] flex h-[37px] w-[12px] items-center justify-center bg-[#f5cec1]"><span className="-ml-px h-[25px] w-px bg-white" /></div>
    </div>
  );
}
function Workspace() {
  return (
    <div className="flex w-[1003px] shrink-0 flex-col">
      <div className="flex h-[596px] shrink-0">
        <div className="flex w-[991px] shrink-0 flex-col">
          <HRuler />
          <div className="flex shrink-0"><VRuler /><Canvas /></div>
        </div>
        <div className="w-[12px] shrink-0 bg-[#d1d1d1] pl-[3px] pt-[126px]"><div className="h-[163px] w-[6px] rounded-sm bg-[#868686]" /></div>
      </div>
      <div className="flex h-[12px] w-[991px] shrink-0 items-center bg-[#d1d1d1] pl-[286px]"><div className="h-[6px] w-[405px] rounded-sm bg-[#868886]" /></div>
      <div className="flex h-[25px] shrink-0 text-[12.500px] text-[#3c3c3c]">
        <div className="flex w-[118px] items-center">
          <Svg w={10} h={16} c="ml-[14px]"><path d="M.5 0v16M9 1v14L1 8z" stroke="#b0b0b0" fill="#b0b0b0" strokeWidth=".9" /></Svg>
          <Svg w={9} h={14} c="ml-[15px]"><path d="M8.500 0v14L0 7z" fill="#b0b0b0" /></Svg>
          <Svg w={9} h={14} c="ml-[16px]"><path d="M.5 0v14L8 7z" fill="#b0b0b0" /></Svg>
          <Svg w={11} h={16} c="ml-[15px]"><path d="M10 0v16M1 1v14L8.500 8z" stroke="#b0b0b0" fill="#b0b0b0" strokeWidth=".9" /></Svg>
        </div>
        <div className="flex w-[63px] items-center justify-center border-b-[3px] border-[#979797] bg-white pt-[2px]"><Fit className="w-[37px]">Layout</Fit></div>
        <Fit className="ml-[12px] mt-[6px] w-[46px]">Controls</Fit>
        <Fit className="ml-[27px] mt-[6px] w-[90px]">Dimension Lines</Fit>
      </div>
    </div>
  );
}

/* ---------- Draw: sidebar ---------- */
const GearSmall = () => (
  <Svg w={11} h={11}><circle cx="5.500" cy="5.500" r="4.500" fill="#dadada" stroke="#8f8f8f" strokeDasharray="1.900 .9" strokeWidth="1.600" /><circle cx="5.500" cy="5.500" r="1.600" fill="#f7f7f7" stroke="#999" strokeWidth=".8" /></Svg>
);
const Head = ({ w, gear = true, children }) => (
  <div className="flex h-[26px] shrink-0 items-center bg-gradient-to-b from-[#e5e5e5] to-[#f7f7f7] pl-1">
    <Svg w={11} h={11} c="mt-px"><circle cx="5.500" cy="5.500" r="4.500" fill="#f4f4f4" stroke="#666" /><path d="M2.500 3.500L5.500 6l3-2.500M3 5.500l2.500 2.300L8 5.500" stroke="#555" strokeWidth=".9" /></Svg>
    <Fit className={"ml-[5px] mt-[3px] text-[14px] font-bold text-[#333] " + w}>{children}</Fit>
    {gear && <div className="ml-auto mr-[4px] mt-[7px]"><GearSmall /></div>}
  </div>
);
const Glyph = ({ c = "", children }) => <span className={"inline-block shrink-0 text-center font-bold leading-none text-[#4a4a4a] " + c}>{children}</span>;
const Lines = ({ d, c = "" }) => <Svg w={14} h={13} c={c}><path d={d} stroke="#484848" strokeWidth="1.100" /></Svg>;
const Spin = ({ c = "" }) => (
  <div className={"flex h-[34px] w-[131px] shrink-0 overflow-hidden rounded-[4px] border border-[#c2c2c2] bg-white text-[14px] text-[#333] " + c}>
    <div className="flex w-[61px] items-center border-r border-[#dadada] pl-px"><Fit className="w-[32px]">0.00″</Fit></div>
    <div className="flex w-[35px] items-center justify-center border-r border-[#dadada]"><Svg w={10} h={11}><path d="M0 6.500h10" stroke="#444" /></Svg></div>
    <div className="flex flex-1 items-center justify-center"><Svg w={11} h={12}><path d="M0 6.500h11M5.500 1v11" stroke="#444" /></Svg></div>
  </div>
);
const BLU = "#4aa3d8", PUR = "#a46fdc";
const BoneV = ({ y, f }) => <path d={`M5 ${y}h4v2h-1v4h1v2h-4v-2h1v-4h-1z`} fill={f} stroke={f} />;
const BoneH = ({ x, y, f }) => <path d={`M${x} ${y}h2v1h3v-1H${x + 7}v4H${x + 5}v-1h-3v1H${x}z`} fill={f} stroke={f} strokeWidth=".8" />;
const Arr = ({ r, c }) => (
  <Svg w={14} h={14} c={c}><path transform={`rotate(${r} 7 7)`} d="M.5 7h10M6.500 1L12 7l-5.500 6" stroke="#4f4f4f" strokeWidth="3.600" /></Svg>
);

function Properties() {
  return (
    <div className="ml-[4px] mt-[3px] flex h-[625px] w-[345px] shrink-0 flex-col border border-[#e3e3e3] bg-[#f7f7f7]">
      <div className="flex h-[26px] shrink-0 items-center">
        <Svg w={3} h={14} c="ml-[5px]"><path d="M1 0v14" stroke="#999" strokeWidth="2" strokeDasharray="2 2" /></Svg>
        <Fit className="ml-[16px] mt-px w-[76px] text-[14px] font-bold text-[#333]">Properties</Fit>
        <Cross s={7} c="ml-auto mr-[5px] mt-[6px]" />
      </div>
      <Head w="w-[70px]">Character</Head>
      <div className="mt-[7px] flex h-[34px] shrink-0 text-[14px] text-[#3a3a3a]">
        <div className="ml-[5px] flex w-[243px] items-center rounded-[4px] border border-[#bdbdbd] bg-white">
          <Fit className="ml-[10px] w-[106px]">Liberation Sans</Fit>
          <div className="ml-auto flex h-full w-[33px] items-center justify-center border-l border-[#bdbdbd]"><Svg w={10} h={5}><path d="M0 0h10L5 5z" fill="#333" /></Svg></div>
        </div>
        <div className="ml-[6px] flex w-[83px] items-center rounded-[4px] border border-[#bdbdbd] bg-white">
          <Fit className="ml-[10px] w-[16px]">18</Fit>
          <div className="ml-auto flex h-full w-[33px] items-center justify-center border-l border-[#bdbdbd]"><Svg w={10} h={5}><path d="M0 0h10L5 5z" fill="#333" /></Svg></div>
        </div>
      </div>
      <div className="mt-[16px] flex h-[24px] shrink-0 items-center pl-[11px]">
        <Glyph c="w-[14px] text-[18px] font-extrabold">B</Glyph>
        <Glyph c="ml-[11px] w-[14px] font-['Liberation_Serif',serif] text-[19px] italic">I</Glyph>
        <div className="ml-[9px] flex w-[14px] flex-col items-center"><Glyph c="h-[14px] text-[16px] leading-[14px]">U</Glyph><span className="h-px w-[10px] bg-[#4a4a4a]" /></div>
        <Tri c="ml-[8px] mt-1" />
        <div className="relative ml-[8px] flex w-[14px] justify-center"><Glyph c="text-[16px]">S</Glyph><span className="absolute inset-x-0 top-[8px] h-px bg-[#4a4a4a] shadow-[0_1px_0_#f7f7f7]" /></div>
        <Glyph c="ml-[9px] w-[16px] text-[18px] [text-shadow:2px_1px_0_#bbb]">A</Glyph>
        <Glyph c="ml-auto mt-[2px] w-[13px] text-[17px]">A</Glyph><Svg w={6} h={4} c="-ml-[2px] -mt-[12px]"><path d="M0 4l3-4 3 4z" fill="#5fa9e0" /></Svg>
        <Glyph c="ml-[8px] mt-[5px] w-[11px] text-[14px]">A</Glyph><Svg w={6} h={4} c="-ml-px mr-[10px] -mt-[12px]"><path d="M0 0h6L3 4z" fill="#a87bdc" /></Svg>
      </div>
      <div className="mt-[22px] flex h-[24px] shrink-0 items-center pl-[9px]">
        <div className="flex w-4 flex-col items-center"><Glyph c="h-[13px] text-[16px] leading-[13px]">A</Glyph><span className="h-1 w-4 bg-[#d21f1f]" /></div>
        <Tri c="ml-[6px] mt-1" />
        <Svg w={17} h={17} c="ml-[17px]"><path d="M5 8l6-7 4 3-6 7z" fill="#f3d649" stroke="#a88a17" strokeWidth=".8" /><path d="M5 8l4 3-2 1.500-4 0z" fill="#999" /><path d="M.5 12.800h16V17H.5z" fill="#ff0" /></Svg>
        <Tri c="ml-[6px] mt-1" />
        <div className="ml-auto flex w-4 flex-col items-center"><Glyph c="h-[11px] w-4 text-[14px] leading-[11px]">ab</Glyph><Svg w={14} h={6}><path d="M0 0v6l4-3zM14 0v6l-4-3z" fill="#ee7a1e" /></Svg></div>
        <Tri c="ml-[6px] mt-1" />
        <Glyph c="ml-[19px] w-[11px] text-[16px]">A</Glyph><Glyph c="-mt-[10px] w-[6px] text-[11px] text-[#e77a1e]">2</Glyph>
        <Glyph c="ml-[8px] w-[11px] -mt-[2px] text-[16px]">A</Glyph><Glyph c="mr-[8px] mt-[8px] w-[6px] text-[11px] text-[#e77a1e]">2</Glyph>
      </div>
      <div className="h-[12px] shrink-0" />
      <Head w="w-[71px]">Paragraph</Head>
      <div className="mt-[10px] flex h-[27px] shrink-0 items-center pl-[5px]">
        <div className="flex h-[27px] w-[25px] items-center justify-center rounded-[4px] border border-[#bdbdbd] bg-[#d2d2d2]"><Lines d="M0 1.500h14M0 4.500h9M0 6.500h14M0 9.500h9M0 11.500h14" /></div>
        <Lines c="ml-[6px]" d="M0 1.500h14M3 4.500h8M0 6.500h14M3 9.500h8M0 11.500h14" />
        <Lines c="ml-[11px]" d="M0 1.500h14M5 4.500h9M0 6.500h14M5 9.500h9M0 11.500h14" />
        <Lines c="ml-[11px]" d="M0 1.500h14M0 4.500h14M0 8.500h14M0 11.500h14" />
        <div className="ml-auto flex h-[27px] w-[25px] items-center justify-center rounded-[4px] border border-[#bdbdbd] bg-[#d2d2d2]"><Lines d="M0 1.500h14M0 4.500h9" /></div>
        <Lines c="ml-[6px]" d="M0 4.500h14M0 7.500h9" />
        <Lines c="ml-[11px] mr-[11px]" d="M0 8.500h14M0 11.500h9" />
      </div>
      <div className="ml-[6px] mt-[14px] h-px w-[330px] shrink-0 bg-[#dadada]" />
      <div className="mt-[8px] flex h-4 shrink-0 items-center pl-[5px] text-[14px] text-[#3a3a3a]">
        <Fit className="w-[58px]">Spacing:</Fit><Fit className="ml-[111px] w-[49px]">Indent:</Fit>
      </div>
      <div className="mt-[14px] flex h-[16px] shrink-0 items-center pl-[11px]">
        <Svg w={14} h={12}><path d="M0 5l4-4 4 4zM0 7l4 4 4-4z" fill={BLU} stroke="#2b7db0" strokeWidth=".5" /><path d="M9 2h5M9 6h5M9 10h5" stroke="#444" strokeWidth="1.200" /></Svg>
        <Svg w={14} h={12} c="ml-[11px]"><path d="M0 1.500h8L4 6zM0 10.500h8L4 6z" fill={PUR} stroke="#7d46b4" strokeWidth=".5" /><path d="M9 2h5M9 6h5M9 10h5" stroke="#444" strokeWidth="1.200" /></Svg>
        <Svg w={15} h={16} c="ml-[130px]"><path d="M0 2.500h8M0 12.500h8M9 2.500h6M9 13.500h6" stroke="#aaa" /><path d="M0 6.500h4V4l4 3.500L4 11V8.500H0z" fill={BLU} stroke="#2b7db0" strokeWidth=".4" /><path d="M9 6h6M9 9.500h5" stroke="#333" strokeWidth="1.800" /></Svg>
        <Svg w={15} h={16} c="ml-[10px]"><path d="M0 2.500h8M0 12.500h8M9 2.500h6M9 13.500h6" stroke="#aaa" /><path d="M8 6.500H4V4L0 7.500 4 11V8.500h4z" fill={PUR} stroke="#7d46b4" strokeWidth=".4" /><path d="M9 6h6M9 9.500h5" stroke="#333" strokeWidth="1.800" /></Svg>
        <Svg w={15} h={16} c="ml-[10px]"><path d="M1 2.500h14M9 5.500h6M9 8.500h6M9 11.500h6" stroke="#444" /><path d="M0 6.500h4V4l4 3.500L4 11V8.500H0z" fill={BLU} stroke="#2b7db0" strokeWidth=".4" /></Svg>
      </div>
      <div className="mt-[16px] flex shrink-0 items-center pl-[10px]">
        <Svg w={14} h={14}><BoneV y={0.5} f={BLU} /><path d="M0 10.500h14M0 13.500h14" stroke="#444" /></Svg><Spin c="ml-[8px]" />
        <Svg w={15} h={12} c="ml-[17px]"><path d="M3 1.500h12M9 4.500h6M9 7.500h6M3 10.500h12" stroke="#444" /><BoneH x={0.5} y={4} f={BLU} /></Svg><Spin c="ml-[6px]" />
      </div>
      <div className="mt-[6px] flex shrink-0 items-center pl-[10px]">
        <Svg w={14} h={14}><BoneV y={5.5} f={PUR} /><path d="M0 .5h14M0 3.500h14" stroke="#444" /></Svg><Spin c="ml-[8px]" />
        <Svg w={15} h={12} c="ml-[17px]"><path d="M0 1.500h12M0 4.500h6M0 7.500h6M0 10.500h12" stroke="#444" /><BoneH x={7.5} y={4} f={PUR} /></Svg><Spin c="ml-[6px]" />
      </div>
      <div className="mt-[6px] flex h-[34px] shrink-0 items-center pl-[10px]">
        <Svg w={14} h={12}><path d="M0 2.500h14M0 5.500h14M0 8.500h14" stroke="#444" /></Svg><Tri c="ml-[8px]" />
        <Svg w={15} h={14} c="ml-[140px]"><path d="M9 4.500h6M2 7.500h9M2 10.500h13M2 13.500h9" stroke="#444" /><BoneH x={0.5} y={0.5} f={BLU} /></Svg><Spin c="ml-[6px]" />
      </div>
      <div className="h-[6px] shrink-0" />
      <Head w="w-[33px]" gear={false}>Lists</Head>
      <div className="mt-[15px] flex h-[14px] shrink-0 items-center pl-[9px]">
        <Svg w={14} h={12}><path d="M4 1.500h8M4 4h10M4 8.500h8M4 11h10" stroke="#555" /><path d="M0 2h2.500M0 9h2.500" stroke="#555" strokeWidth="2.500" /></Svg><Tri c="ml-[7px] mt-1" />
        <div className="ml-[6px] flex"><span className="flex w-[5px] flex-col text-[7px] font-bold leading-[7px] text-[#555]"><span>1</span><span>2</span></span><Svg w={10} h={14}><path d="M0 2.500h8M0 5h10M0 9.500h8M0 12h10" stroke="#555" /></Svg></div><Tri c="ml-[7px] mt-1" />
        <Arr r={0} c="ml-auto" /><Arr r={180} c="ml-[11px]" /><Arr r={90} c="ml-[11px]" /><Arr r={-90} c="ml-[11px] mr-[11px]" />
      </div>
    </div>
  );
}

function Deck() {
  return (
    <div className="flex flex-1 flex-col items-center">
      <Svg w={24} h={24} c="mt-[7px]"><path d="M10 1.500h4l1 2.500 3-1 2.500 3-1.500 2.500 3 1.500v4l-3 1.500 1.500 3-3 2.500-2.500-1.500-1.500 3h-3l-1.500-3L6 21l-3-2.500 1.500-3-3-1.500v-4l3-1.500L3 6l3-3 3 1z" fill="url(#gy)" stroke="#8e8e8e" /><circle cx="12" cy="12" r="6" stroke="#aaa" strokeWidth="1.500" /><circle cx="12" cy="12" r="3.500" fill="#fff" stroke="#888" /></Svg>
      <div className="mt-[7px] h-px w-[22px] bg-[#dcdcdc]" />
      <div className="mt-[3px] flex size-8 items-center justify-center rounded-[4px] border border-[#c0c0c0] bg-[#fafafa]">
        <Svg w={20} h={20}><rect x=".5" y=".5" width="19" height="19" rx="1" fill="url(#gy)" stroke="#8b8b8b" /><rect x="3.500" y="7" width="13" height="7" rx="3.500" fill="#3f93e0" stroke="#2c6fb4" strokeWidth=".6" /><rect x="10" y="7" width="6.500" height="7" rx="3" fill="#fff" stroke="#777" strokeWidth=".7" /></Svg>
      </div>
      <Svg w={22} h={22} c="mt-[7px]"><path d="M11 1.500L20.500 11 11 20.500 1.500 11z" fill="url(#gy)" stroke={G} /></Svg>
      <Svg w={24} h={24} c="mt-[12px]"><path d="M.5 17L5.500 1H10l5.500 16H11l-1-3.500H6L5 17zM7 10.500h2.500L8.300 5z" fill="#4a4a4a" /><path d="M23 7l-8 10" stroke="#b5651d" strokeWidth="3" /><path d="M16 15l-4 6" stroke="#8d1b4c" strokeWidth="3" /><path d="M9 23q2-3 4-3z" fill="#e64be0" stroke="#e64be0" /></Svg>
      <Svg w={24} h={24} c="mt-[11px]"><path d="M3 1l19 2-1 15-20-1z" fill="#4b86b8" stroke="#eee" /><rect x="2.500" y="5.500" width="20" height="16" fill="#fff" stroke="#888" /><path d="M4 7h17v8H4z" fill="#2e9fe2" /><path d="M4 13q8-3 17 0v7H4z" fill="#f3c98a" /><path d="M8 14.500v3M6.500 16h3" stroke="#e33b1c" strokeWidth="1.300" /></Svg>
      <Svg w={24} h={24} c="mt-[12px]"><circle cx="12" cy="12" r="10" fill="#4d5a72" stroke="#b5b5b5" strokeWidth="2.500" /><circle cx="12" cy="12" r="11.300" stroke="#777" strokeWidth=".6" /><path d="M12 5l1.500 5 5.500 2-5.500 2L12 19l-1.500-5L5 12l5.500-2zM7 17l4-3M17 17l-4-3" fill="#f0f0f0" stroke="#ddd" strokeWidth=".6" /><path d="M15 4l-2 7-7-3 6 4z" fill="#df2c2c" stroke="#df2c2c" /></Svg>
    </div>
  );
}

/* ---------- Draw: status bar ---------- */
const SSep = ({ c }) => <span className={"block h-[14px] w-px shrink-0 bg-[#d4d4d4] " + c} />;
function StatusBar() {
  return (
    <div className="flex h-[21px] shrink-0 items-center border-b border-t border-t-[#a8a8a8] border-b-[#bcbcbc] pt-px text-[12px] text-[#3a3a3a]">
      <Fit className="ml-[10px] w-[109px]">Slide 1 of 1 (Layout)</Fit><SSep c="ml-[4px]" />
      <Fit className="ml-[8px] w-[214px]">TextEdit: Paragraph 1, Row 1, Column 1</Fit><SSep c="ml-[328px]" />
      <Fit className="ml-[8px] w-[42px]">Default</Fit><SSep c="ml-[228px]" />
      <Svg w={13} h={10} c="ml-[10px]"><path d="M0 2.500h5M2.500 0v5" stroke="#d05f00" /><path d="M7 2.500h5.500v6.500H3V5" stroke="#444" strokeDasharray="1 1" /></Svg>
      <Fit className="ml-[7px] w-[59px]">8.90 / 1.45</Fit>
      <Svg w={13} h={11} c="ml-[138px]"><path d="M4 1.500h9M4.500 0v3M12.500 0v3M1.500 5v6M0 5h3M0 10.500h3" stroke="#d05f00" /><path d="M4.500 5h8v5h-8z" stroke="#444" strokeDasharray="1 1" /></Svg>
      <Fit className="ml-[7px] w-[60px]">0.20 x 0.38</Fit><SSep c="ml-[132px]" />
      <Svg w={13} h={11} c="ml-[5px]"><rect x=".5" y=".5" width="12" height="10" fill="#e6e6e6" stroke="#999" /><path d="M5.500 2h2v3h2L6.500 8.500 3.500 5h2z" fill="#777" stroke="#555" strokeWidth=".8" /></Svg><SSep c="ml-[3px]" />
      <SSep c="ml-[28px]" />
      <Svg w={14} h={15} c="ml-[5px]"><rect x=".5" y=".5" width="13" height="13" rx="2" fill="#eee" stroke="#999" /><path d="M2.500 6V2.500H6V5H4.500V6zM8 2.500h3.500V6H10V5H8zM2.500 8v3.500H5V10" stroke="#999" strokeWidth=".9" fill="#fff" /><path d="M4.500 11.500l3.500-3v6zM13.500 11.500l-3.500-3v6z" fill="#f28a1e" stroke="#c05a00" strokeWidth=".6" /></Svg><SSep c="ml-[2px]" />
      <Svg w={127} h={12} c="ml-[8px]"><path d="M0 6.500h9M118 6.500h9M122.500 2v9" stroke="#777" /><path d="M15 6h97" stroke="#999" strokeWidth="1.500" /><path d="M38 3.500v5" stroke="#999" strokeWidth="2" /><circle cx="60" cy="6" r="4.700" fill="#f8f8f8" stroke="#888" /></Svg>
      <SSep c="ml-[7px]" /><Fit className="ml-[7px] w-[25px]">95%</Fit>
    </div>
  );
}

const menus = [
  ["File", "w-[24px]"], ["Edit", "w-[26px]"], ["View", "w-[33px]"], ["Insert", "w-[38px]"], ["Format", "w-[50px]"],
  ["Page", "w-[33px]"], ["Shape", "w-[41px]"], ["Tools", "w-[35px]"], ["Window", "w-[54px]"], ["Help", "w-[30px]"],
];

function DrawWindow() {
  return (
    <section className="absolute left-[121px] top-[37px] flex h-[756px] w-[1651px] flex-col overflow-hidden rounded-t-lg bg-[#f7f7f7] shadow-[0_4px_18px_2px_rgba(0,0,0,0.42)]">
      <div className="flex h-[38px] shrink-0 items-center border-t border-[#4d4c4a] bg-[#3d3c3a]">
        <span className="w-[119px]" />
        <div className="flex flex-1 justify-center"><Fit className="w-[239px] text-[14px] font-bold text-[#f2f1ef]">grafy_lab1.odg - LibreOffice Draw</Fit></div>
        <div className="flex w-[120px] justify-end pr-[9px]"><WinButtons gap="gap-[25px]" /></div>
      </div>
      <nav className="flex h-[24px] shrink-0 items-center gap-[16.200px] pl-2 text-[14.500px] text-[#979797]">
        {menus.map(([m, w]) => <Fit key={m} className={w}>{m}</Fit>)}
        <Cross c="ml-auto mr-[14px]" f="#999" />
      </nav>
      <div className="h-px w-[1615px] shrink-0 bg-[#dadada]" />
      <StandardBar />
      <div className="flex h-[633px] shrink-0 pt-px">
        <Toolbox />
        <PagesPanel />
        <Workspace />
        <div className="flex flex-1 border-y border-[#b0b0b0]">
          <div className="flex w-[8px] shrink-0 flex-col border-x border-[#b0b0b0] bg-[#f9f9f9] pt-[279px]">
            <div className="-ml-px flex h-[73px] w-[7px] items-center bg-[#979797]"><Svg w={6} h={7}><path d="M1 0v7l5-3.500z" fill="#fff" /></Svg></div>
          </div>
          <Properties />
          <Deck />
        </div>
      </div>
      <div className="h-px shrink-0" />
      <StatusBar />
    </section>
  );
}

/* ---------- desktop ---------- */
function Wallpaper() {
  return (
    <svg className="absolute inset-0" width="1918" height="888" viewBox="0 0 1918 888" fill="none">
      <path d="M731 27h47v12h-47zM1212 39l20-12h121l-4 12zM797 27h15l14 12h-12z" fill="#b52b45" opacity=".7" />
      <path d="M72 338l45 40v60l-45 20z" fill="#7a1768" opacity=".3" />
      <path d="M486 794h52l80 94H516z" fill="#46063f" opacity=".45" />
      <path d="M992 851l2 36 102-21 27-17M1098 851l-2 14" stroke="#50074b" strokeWidth="7" />
    </svg>
  );
}

export default function App() {
  return (
    <div className="relative flex h-[888px] w-[1918px] flex-col overflow-hidden bg-[linear-gradient(180deg,#9d243a_3%,#851b4a_17%,#6b115e_33%,#590a5a_50%,#4b0551_66%,#3c033b_80%,#30022d_100%)] font-['Noto_Sans','Open_Sans',sans-serif]">
      <Wallpaper />
      <Gradients />
      <div className="absolute left-[111px] top-[36px] flex h-[43px] w-[48px] flex-col rounded bg-[#6b2b4a] pt-[10px]"><div className="flex-1 rounded bg-[#6a6a6a]" /></div>
      <span className="absolute left-[101px] top-[82px] text-[14px] leading-none text-white [text-shadow:1px_1px_1px_#000]">mk</span>
      <div className="absolute left-[116px] top-[143px] h-[44px] w-[40px] rounded-md bg-[#a9a7a3]" />
      <span className="absolute left-[116px] top-[191px] text-[14px] leading-none text-white [text-shadow:1px_1px_1px_#000]">T</span>
      <div className="relative flex h-full flex-col">
        <TopBar />
        <div className="flex min-h-0 flex-1"><Dock /></div>
      </div>
      <TerminalWindow />
      <GeditWindow />
      <DrawWindow />
    </div>
  );
}
